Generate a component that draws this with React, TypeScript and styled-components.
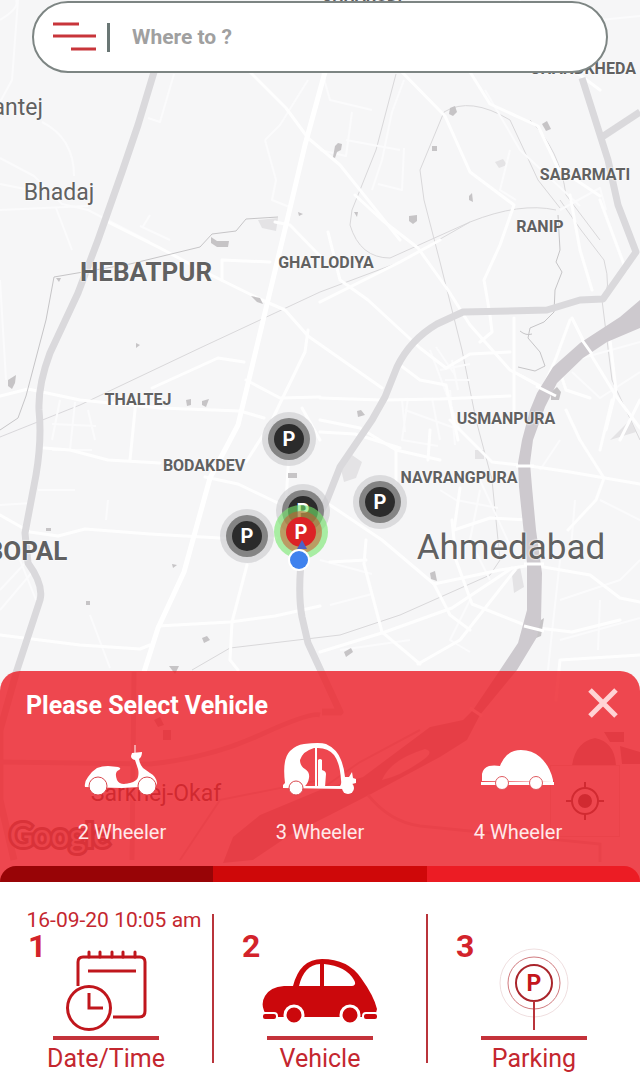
import React, { useState } from "react";
import styled, { createGlobalStyle, css } from "styled-components";

const GlobalStyle = createGlobalStyle`
  * { box-sizing: border-box; }
  body { margin: 0; background: #fff; font-family: Roboto, "Liberation Sans", sans-serif; }
  button, input { font: inherit; color: inherit; }
  button { background: none; border: 0; padding: 0; margin: 0; cursor: pointer; }
`;

const Page = styled.div`
  min-height: 100vh;
  display: flex;
  flex-direction: column;
`;

const MapArea = styled.main`
  position: relative;
  flex: 1;
  display: flex;
  flex-direction: column;
  justify-content: space-between;
  gap: 240px;
  overflow: hidden;
  background: #f6f6f7;
`;

/* Free canvas: the map scales as one piece, labels and pins sit at map coordinates. */
const MapCanvas = styled.div`
  position: absolute;
  top: 0;
  left: 50%;
  transform: translateX(-50%);
  min-width: 100%;
  min-height: 100%;
  aspect-ratio: 640 / 882;
  svg.roads { position: absolute; inset: 0; width: 100%; height: 100%; }
`;

const onMap = css<{ $x: number; $y: number }>`
  position: absolute;
  left: ${(p) => (p.$x / 640) * 100}%;
  top: ${(p) => (p.$y / 882) * 100}%;
  transform: translate(-50%, -50%);
`;

const Place = styled.span<{ $x: number; $y: number; $size: number; $weight: number }>`
  ${onMap}
  font-size: ${(p) => p.$size}px;
  font-weight: ${(p) => p.$weight};
  line-height: 1;
  color: #616161;
  white-space: nowrap;
  text-shadow: 0 0 2px #fff, 0 0 2px #fff;
`;

const Watermark = styled.span<{ $x: number; $y: number }>`
  ${onMap}
  font: 400 32px/1 Lato, sans-serif;
  color: #e0e0e0;
  -webkit-text-stroke: 6px #8a8a8a;
  paint-order: stroke fill;
`;

const Pin = styled.button<{ $x: number; $y: number; $active?: boolean }>`
  ${onMap}
  width: 54px;
  height: 54px;
  border-radius: 50%;
  display: grid;
  place-items: center;
  background: ${(p) => (p.$active ? "rgba(116, 232, 106, .6)" : "rgba(205, 205, 207, .65)")};
`;

const PinRing = styled.span<{ $active?: boolean }>`
  width: 42px;
  height: 42px;
  border-radius: 50%;
  display: grid;
  place-items: center;
  background: ${(p) => (p.$active ? "rgba(200, 90, 50, .55)" : "#848484")};
`;

const PinCore = styled.span<{ $active?: boolean }>`
  width: 30px;
  height: 30px;
  border-radius: 50%;
  display: grid;
  place-items: center;
  background: ${(p) => (p.$active ? "#dc2226" : "#2b2b2b")};
  color: #fff;
  font: 700 20px/30px "Liberation Sans Narrow", Roboto, sans-serif;
`;

const Locate = styled.button<{ $x: number; $y: number }>`
  ${onMap}
  width: 70px;
  height: 72px;
  display: grid;
  place-items: center;
  border: 1px solid #dedede;
  color: #666;
`;

const Position = styled.span<{ $x: number; $y: number }>`
  ${onMap}
  width: 24px;
  height: 44px;
`;

const SearchBar = styled.form`
  position: relative;
  height: 72px;
  margin: 1px 32px 0;
  padding: 0 24px 0 19px;
  display: flex;
  align-items: center;
  background: #fff;
  border: 2px solid #7d8583;
  border-radius: 36px;
`;

const MenuButton = styled.button`
  width: 44px;
  height: 44px;
  display: grid;
  place-items: center;
`;

const SearchDivider = styled.span`
  width: 3px;
  height: 29px;
  margin-left: 10px;
  background: #6a7775;
`;

const SearchInput = styled.input`
  flex: 1;
  min-width: 0;
  height: 44px;
  margin-left: 22px;
  padding: 0;
  border: 0;
  outline: 0;
  background: none;
  font-size: 21px;
  font-weight: 700;
  &::placeholder { color: #a0a0a0; opacity: 1; }
`;

const Sheet = styled.section`
  position: relative;
  background: rgba(236, 28, 36, 0.8);
  border-radius: 20px 20px 0 0;
  color: #fff;
`;

const SheetHeader = styled.header`
  display: flex;
  align-items: flex-start;
  justify-content: space-between;
  height: 38px;
  margin: 16px 21px 16px 26px;
`;

const SheetTitle = styled.h2`
  margin: 0;
  font-size: 25px;
  font-weight: 700;
  line-height: 38px;
`;

const CloseButton = styled.button`
  width: 32px;
  height: 32px;
  color: #ffd3d5;
  svg { display: block; }
`;

const VehicleList = styled.div`
  display: grid;
  grid-template-columns: repeat(3, 1fr);
  padding: 0 23px 22px;
`;

const VehicleButton = styled.button`
  display: flex;
  flex-direction: column;
  align-items: center;
  gap: 23px;
  font-size: 20px;
  line-height: 24px;
  color: #ffe9ea;
`;

const ProgressBar = styled.div`
  display: grid;
  grid-template-columns: repeat(3, 1fr);
  height: 16px;
  border-radius: 16px 16px 0 0;
  overflow: hidden;
`;

const ProgressPart = styled.span<{ $color: string }>`
  background: ${(p) => p.$color};
`;

const Steps = styled.nav`
  display: grid;
  grid-template-columns: 1fr 2px 1fr 2px 1fr;
  padding: 24px 0 16px;
  background: #fff;
  color: #c4272f;
`;

const StepDivider = styled.span`
  margin: 8px 0 13px;
  background: #b9343b;
`;

const StepButton = styled.button`
  display: flex;
  flex-direction: column;
  align-items: center;
`;

const StepWhen = styled.time`
  height: 26px;
  padding-left: 16px;
  font-size: 21px;
  line-height: 28px;
  white-space: nowrap;
`;

const StepBody = styled.span`
  width: 100%;
  height: 104px;
  display: grid;
  > * { grid-area: 1 / 1; }
  > svg { place-self: end center; }
`;

const StepNumber = styled.span`
  place-self: start;
  padding-left: 28px;
  font-size: 32px;
  font-weight: 700;
  line-height: 28px;
  color: #d3232b;
`;

const StepRule = styled.span`
  width: 106px;
  height: 4px;
  background: #c4323a;
`;

const StepLabel = styled.span`
  font-size: 25px;
  line-height: 38px;
  height: 36px;
`;

const localRoads = [
  "M0 20 Q20 8 16 0", "M42 122 Q74 138 74 176", "M0 158 L34 176 L62 204 L88 210 L150 242", "M0 184 L40 192 M0 210 L88 206",
  "M56 208 L72 250", "M0 102 L12 80 L18 0", "M110 60 L82 18", "M174 74 L160 122 L148 118",
  "M322 72 L330 100 L372 110 M352 112 L346 156 L320 150 M346 140 L400 150 M404 80 L392 112 L382 160 L372 190",
  "M265 140 L280 125 L308 80 M265 140 L276 180 L272 200 L292 208", "M378 184 L402 190 L404 148",
  "M0 280 L6 380 M60 400 L52 440 M75 402 L70 450 M95 440 L88 410 M52 424 L96 426 M52 450 L92 450 M38 490 L75 490 M108 500 L106 520",
  "M0 505 L32 503 M0 590 L28 560 M0 610 L34 570 M12 540 L36 600 M90 615 L110 668", "M140 226 L170 240 M142 228 L150 215",
  "M402 400 L405 432 M432 398 L440 440 M450 390 L455 445 M405 410 L460 430 M408 398 L402 440 L438 446",
  "M440 370 L470 364 M445 380 L470 380 M458 390 L452 360 M430 350 L460 430 M436 347 L455 375",
  "M480 490 L470 540 L490 580 M440 490 L456 500 L498 508 M480 480 L512 550", "M560 440 L540 470 M575 500 L570 560 M600 500 L640 520",
  "M560 560 L552 632 L548 670 M560 600 L620 580 L640 560 M600 600 L598 650 M560 640 L640 618",
  "M320 560 L372 574 M330 605 L372 594 M340 650 L410 640 M470 600 L450 640 L470 652", "M575 360 L640 342 M572 372 L600 398 L640 372",
  "M485 90 L520 150 L580 206 M510 150 L500 190 L516 200", "M600 20 L640 16 M520 0 L520 20 M560 210 L600 188 L606 210",
];

const mainRoads = [
  "M250 72 L286 108 L308 138 L340 165 L372 205 L400 240",
  "M108 222 L160 248 L205 272 L262 300 L285 310 L308 336 L382 388",
  "M395 65 L445 116 L470 172 L514 205 L500 245 L484 280 L490 315 L492 332 L480 342",
  "M355 195 L382 220 L418 248 L448 290 L470 325 L510 370 L548 390",
  "M470 72 L490 104 L538 126 L558 168 L600 196",
  "M0 396 L28 389 L80 400 L160 408 L240 411 L264 418",
  "M0 515 L30 532 L58 536 L85 529 L150 534 L220 538 L276 538",
  "M44 448 L70 450 L108 460 L160 463", "M205 477 L238 484 L280 504", "M158 626 L230 622 L275 616 L320 606",
  "M0 635 L80 645 L140 649 L150 645", "M247 565 L232 622 L230 660 L238 670",
  "M320 398 L382 400 L440 399 L510 396", "M320 432 L355 434 L400 448", "M514 318 L514 420",
  "M246 380 L280 398 L320 397", "M308 330 L305 352 L270 424 L246 462", "M136 400 L130 460 M152 388 L218 358 L244 362",
  "M222 260 L222 280 M222 260 L270 262", "M275 222 L290 225 L320 256",
  "M328 232 L340 280 L368 300 L420 348 L446 368 L470 354 L510 352",
  "M320 302 L400 262 L440 240", "M400 365 L420 380 L446 385 L458 440",
  "M330 505 L382 540 L434 584 L500 570 L532 565 L590 575 L620 598 L640 602",
  "M450 420 L492 462 L530 466 L570 472 L640 484", "M566 410 L580 440 L604 478 L596 500 L568 530",
  "M572 318 L588 350 L616 396 L640 428", "M570 320 L556 358 L540 395 L524 440", "M514 372 L550 392",
  "M366 560 L330 562 M366 540 L364 564 L382 632 L420 664", "M320 652 L385 632 L452 608 L512 568",
  "M434 584 L450 615 L470 630", "M452 520 L456 560 L472 604 L530 627 L572 632 L620 620",
  "M418 664 L460 640 L515 570", "M525 628 L510 670", "M460 488 L454 530 L490 518 L530 520",
  "M396 450 L396 482 M430 430 L428 460", "M320 420 L360 428 L396 450 L440 460",
  "M590 398 L566 390 L560 372 M612 400 L600 450", "M620 440 L640 400 M610 340 L616 390 L606 430",
  "M570 195 L580 250 L592 290", "M600 200 L626 270", "M290 440 L286 500", "M302 408 L320 440",
  "M576 72 L600 90 M556 700 L560 660 L640 655",
];

const railways = [
  "M396 74 L376 150 L352 210 L350 225 Q360 258 390 258 L470 222 Q520 202 556 210",
  "M0 437 L80 405 L200 348 L320 292 L400 262 L470 222",
  "M424 200 L440 262 L462 350 L476 420 L492 480 L500 560 L490 575 L400 615 L340 635 L230 648 L192 670",
  "M424 200 L420 170 L444 112 Q470 96 510 120 L538 180 L560 208",
  "M560 200 Q580 230 604 260 Q612 290 602 300 L612 380 L640 440",
  "M530 120 Q560 150 566 195 L600 240",
];

const streams = [
  "M0 430 L18 418 L26 396 L46 320 L54 277 L130 264 L200 247 L212 234 L236 231 L246 219 L278 217",
  "M558 215 L560 250 L556 262 L562 272 L555 290 L554 312 L544 322 L530 328 L528 338 L540 352 L545 366 L535 371 L518 367",
  "M520 331 Q526 336 532 334",
];

const patches = [
  "M450 108 l5 -2 2 6 -4 4 -4 -2z", "M542 124 l5 -3 4 8 -5 2z", "M335 146 l3 -3 4 1 -1 6 -4 2 -2 6 -2 -1z", "M432 146 h5 v5 h-5z",
  "M469 196 l3 -3 1 9 -4 -2z", "M409 216 l8 -1 0 6 -4 3 -4 -3z", "M354 212 h4 l-1 5z", "M298 212 l5 2 -4 2z",
  "M211 237 l6 4 12 0 -1 6 -11 0 -6 -4z", "M56 278 h5 l-2 4z", "M136 343 l4 2 -4 3z", "M8 380 l8 -5 -1 8 -3 6 -4 -3z",
  "M186 400 l5 -1 0 6 -4 1z", "M202 401 l7 -2 -3 8 -4 -2z", "M251 296 l9 2 3 6 -6 -2z", "M357 411 l4 -1 4 5 -7 2z",
  "M288 473 h9 v5 h-9z", "M46 528 h5 v3 h-5z", "M86 601 h4 v4 h-4z", "M172 564 l5 1 -4 3z", "M202 638 l5 -2 3 4 -6 3z",
  "M169 666 h10 l-4 8z", "M344 652 l7 -4 2 4 -7 5z", "M551 392 l6 -5 4 5 -2 8 -8 0z", "M430 573 l5 -2 2 10 -6 -2z",
  "M538 622 l6 -4 -3 18 -5 2z", "M154 720 l6 -3 4 8 -6 2z M163 730 h8 v10 h-8z",
];

const highways = [
  "M154 72 L138 125 L122 172 L98 240 L78 293 L50 353 Q38 385 39 410 Q42 440 36 475 L25 533 L28 563 Q44 585 40 600 L17 670 L0 730 V800 L14 860",
  "M582 78 L608 160 L618 205 L636 252 L603 299 L580 300 L547 310 L463 312 L437 324 Q410 340 397 367 L385 397 L372 420 L340 467 L327 500 L303 545 Q297 590 302 617 L308 643 L340 712 L322 712",
  "M602 137 L640 112",
];

const RoadMap = () => (
  <svg className="roads" viewBox="0 0 640 882" fill="none" aria-hidden="true">
    <rect width="640" height="882" fill="#f6f6f7" />
    <path d="M258 220 L278 218 276 231 262 228z M340 465 L352 455 362 462 356 478 344 482z M495 162 l8 -3 4 6 -8 3z M475 450 h9 v9 h-9z M512 575 l8 -8 4 20 -10 6z M610 440 l20 -20 6 12z" fill="#e4e3e5" />
    <g stroke="#d9d8da" strokeWidth="1">
      {railways.map((d) => <path key={d} d={d} />)}
    </g>
    <g stroke="#fbfbfc" strokeWidth="2" strokeLinejoin="round">
      {localRoads.map((d) => <path key={d} d={d} />)}
    </g>
    <g stroke="#fefefe" strokeWidth="3" strokeLinejoin="round" strokeLinecap="round">
      {mainRoads.map((d) => <path key={d} d={d} />)}
    </g>
    <path d="M325 72 L305 145 L286 225 L262 325 L238 425 L210 478 L184 572 L158 628 L144 672" stroke="#fff" strokeWidth="5" strokeLinejoin="round" />
    <g stroke="#c6c5c7" strokeWidth="1">
      {streams.map((d) => <path key={d} d={d} />)}
    </g>
    <g fill="#c6c4c6">
      {patches.map((d) => <path key={d} d={d} />)}
    </g>
    <g stroke="#dad9dc" strokeWidth="7" strokeLinejoin="round">
      {highways.map((d) => <path key={d} d={d} />)}
    </g>
    <path
      d="M640 300 L620 317 580 343 553 367 537 393 530 410 522 440 518 463 519 487 527 563 527 610 518 643 500 670 473 710 463 720 430 727 363 777 320 790 260 815 233 837 223 863 253 860 290 835 330 815 373 793 440 757 467 740 480 715 517 670 537 637 541 620 542 573 536 530 532 487 530 463 533 440 545 407 557 383 583 358 607 342 640 328z"
      fill="#cdc9ce"
    />
    <path d="M382 780 Q390 760 425 749 Q436 752 420 762 Q400 776 382 780z" fill="#f3f2f4" />
    <g stroke="#fff" strokeWidth="3">
      <path d="M582 340 L592 354 M536 386 L556 396 M516 466 H534 M524 564 H544 M524 626 L544 631 M470 708 L482 716" />
    </g>
    <g stroke="#dcdbde" strokeWidth="5">
      <path d="M0 762 L150 764 Q210 758 260 735 T320 715 M134 672 L132 860" />
      <path d="M368 795 Q390 822 420 826 L600 844 V862" strokeWidth="3" />
      <path d="M320 790 L360 762 L420 730 M180 860 L220 800 L320 780" strokeWidth="2" />
    </g>
    <path d="M572 766 Q575 742 595 738 Q615 742 616 766z M604 732 h20 v10 h-14z M620 746 l20 6 v12 h-18z" fill="#bdbabd" />
  </svg>
);

const places: [string, number, number, number, number][] = [
  ["CHHARODI", 362, -4, 16, 700],
  ["CHANDKHEDA", 583, 69, 16, 700],
  ["Santej", 11, 107, 23, 400],
  ["Bhadaj", 59, 192, 23, 400],
  ["HEBATPUR", 146, 272, 26, 700],
  ["GHATLODIYA", 326, 263, 16, 700],
  ["SABARMATI", 585, 175, 16, 700],
  ["RANIP", 540, 227, 16, 700],
  ["THALTEJ", 138, 400, 16, 700],
  ["BODAKDEV", 204, 466, 16, 700],
  ["USMANPURA", 506, 419, 16, 700],
  ["NAVRANGPURA", 459, 478, 16, 700],
  ["BOPAL", 27, 551, 26, 700],
  ["Ahmedabad", 511, 547, 35, 400],
  ["Sarkhej-Okaf", 156, 793, 23, 400],
];

const parkings: [number, number, boolean][] = [
  [289, 439, false],
  [303, 511, false],
  [247, 536, false],
  [380, 502, false],
  [301, 532, true],
];

const ScooterIcon = () => (
  <svg width="80" height="56" viewBox="0 0 80 56" fill="none" aria-hidden="true">
    <path d="M3 46 Q2 41 6 36 Q10 30 15 27 Q20 25 26 25 L36 26 Q40 27 37 29 Q32 31 35 39 Q37 43 42 43 L48 42 Q55 40 56 36 Q57 32 56 28 L53 19 Q49 18 49 15 L50 12 L60 11 Q60 16 57 18 Q58 24 61 27 L68 32 Q74 35 75 42 L74 45 L40 47z" fill="#fff" />
    <path d="M53 12 V4" stroke="#fff" strokeWidth="1" />
    <g fill="#fff" stroke="#d9484e" strokeWidth="1">
      <circle cx="16" cy="45" r="9" /><circle cx="65" cy="45" r="9" />
    </g>
  </svg>
);

const RickshawIcon = () => (
  <svg width="80" height="56" viewBox="0 0 80 56" fill="none" aria-hidden="true">
    <path fillRule="evenodd" d="M3 47 V44 L5 42 Q2 18 10 10 Q16 4 24 3 Q40 1 46 3 Q57 8 61 19 Q64 26 65 36 L69 36 L72 31 L73 37 L76 38 V42 L72 43 L66 48z M34 7 Q23 10 20 19 Q20 25 25 28 Q30 31 29 37 Q28 43 24 46 H58 Q62 45 61 39 Q60 22 54 14 Q48 7 38 7z" fill="#fff" />
    <path d="M36 4 V46" stroke="#fff" strokeWidth="2" />
    <path d="M38 46 V19 Q40 17 42 19 L42 29 Q46 30 46 33 L45 46z" fill="#fff" />
    <path d="M24 46 H64" stroke="#fff" strokeWidth="2" />
    <circle cx="16" cy="47" r="7" fill="#fff" stroke="#d9484e" strokeWidth="1" />
    <circle cx="68" cy="47" r="6" fill="#fff" />
  </svg>
);

const CarIcon = () => (
  <svg width="80" height="56" viewBox="0 0 80 56" fill="none" aria-hidden="true">
    <path d="M4 40 V33 Q5 27 11 25 Q16 24 22 25 Q24 19 29 14 Q35 9 43 9 Q54 9 62 16 Q72 25 75 39 V41z M3 41 H76 V44 H3z" fill="#fff" />
    <g fill="#fff" stroke="#df5a60" strokeWidth="1">
      <circle cx="24" cy="42" r="6.500" /><circle cx="58" cy="42" r="6.500" />
    </g>
  </svg>
);

const CalendarClockIcon = () => (
  <svg width="82" height="88" viewBox="0 0 82 88" fill="none" stroke="#c0161c" strokeWidth="3" aria-hidden="true">
    <path d="M13 38 V14 Q13 9 18 9 H75 Q80 9 80 14 V63 Q80 69 74 69 H48" />
    <path d="M24 4 V9 M35 4 V9 M47 4 V9 M58 4 V9 M70 4 V9" strokeLinecap="round" />
    <path d="M23 23 H71" />
    <circle cx="24" cy="60" r="21.500" />
    <path d="M24 45 V60 H38" />
  </svg>
);

const RedCarIcon = () => (
  <svg width="116" height="88" viewBox="0 0 116 88" fill="none" aria-hidden="true">
    <path fillRule="evenodd" d="M6 69 Q-3 58 3 48 Q8 39 22 38 L31 38 Q38 11 60 11 Q86 11 99 30 Q112 48 115 61 L113 69 H6z M37 38 H58 V16 Q42 17 37 38z M62 38 H90 Q95 37 92 32 Q84 18 62 16z" fill="#cb080c" />
    <g fill="#cb080c" stroke="#fff" strokeWidth="3">
      <circle cx="32" cy="67" r="9" /><circle cx="88" cy="67" r="9" />
      <rect x="0" y="65" width="15" height="7" rx="3" strokeWidth="2" />
      <rect x="101" y="65" width="15" height="7" rx="3" strokeWidth="2" />
    </g>
  </svg>
);

const ParkingMark = styled.text`
  font: 700 23px "Liberation Sans Narrow", Roboto, sans-serif;
  fill: #c4161c;
`;

const ParkingIcon = () => (
  <svg width="72" height="88" viewBox="0 0 72 88" fill="none" aria-hidden="true">
    <circle cx="36" cy="35" r="34" stroke="#f0dfe0" />
    <circle cx="36" cy="35" r="26" stroke="#d07a7e" />
    <circle cx="36" cy="35" r="18" stroke="#a9252b" strokeWidth="2" />
    <path d="M36 53 V82" stroke="#b9343b" strokeWidth="2" />
    <ParkingMark x="36" y="43" textAnchor="middle">P</ParkingMark>
  </svg>
);

const vehicles = [
  { name: "2 Wheeler", Icon: ScooterIcon },
  { name: "3 Wheeler", Icon: RickshawIcon },
  { name: "4 Wheeler", Icon: CarIcon },
];

const steps = [
  { label: "Date/Time", when: "16-09-20 10:05 am", Icon: CalendarClockIcon },
  { label: "Vehicle", when: "", Icon: RedCarIcon },
  { label: "Parking", when: "", Icon: ParkingIcon },
];

export default function App() {
  const [query, setQuery] = useState("");
  return (
    <>
      <GlobalStyle />
      <Page>
        <MapArea>
          <MapCanvas>
            <RoadMap />
            {places.map(([name, x, y, size, weight]) => (
              <Place key={name} $x={x} $y={y} $size={size} $weight={weight}>{name}</Place>
            ))}
            <Watermark $x={60} $y={835}>Google</Watermark>
            <Locate type="button" aria-label="My location" $x={585} $y={801}>
              <svg width="38" height="38" viewBox="0 0 38 38" fill="none" stroke="currentColor" strokeWidth="2">
                <circle cx="19" cy="19" r="13" /><circle cx="19" cy="19" r="6" fill="currentColor" />
                <path d="M19 0 V6 M19 32 V38 M0 19 H6 M32 19 H38" />
              </svg>
            </Locate>
            {parkings.map(([x, y, active]) => (
              <Pin key={`${x}-${y}`} type="button" aria-label="Parking" $x={x} $y={y} $active={active}>
                <PinRing $active={active}><PinCore $active={active}>P</PinCore></PinRing>
              </Pin>
            ))}
            <Position $x={299} $y={550}>
              <svg width="24" height="44" viewBox="0 0 24 44" aria-hidden="true">
                <path d="M15 12 L20 21 H10z" fill="#4a62c8" />
                <circle cx="12" cy="32" r="11" fill="#fff" />
                <circle cx="12" cy="32" r="9" fill="#3f82ee" />
              </svg>
            </Position>
          </MapCanvas>

          <SearchBar role="search" onSubmit={(e) => e.preventDefault()}>
            <MenuButton type="button" aria-label="Menu">
              <svg width="44" height="30" viewBox="0 0 44 30" stroke="#c8353a" strokeWidth="3">
                <path d="M0 2 H26 M0 14 H43 M18 27 H43" />
              </svg>
            </MenuButton>
            <SearchDivider />
            <SearchInput
              type="text"
              aria-label="Destination"
              placeholder="Where to ?"
              value={query}
              onChange={(e) => setQuery(e.target.value)}
            />
          </SearchBar>

          <Sheet>
            <SheetHeader>
              <SheetTitle>Please Select Vehicle</SheetTitle>
              <CloseButton type="button" aria-label="Close">
                <svg width="32" height="32" viewBox="0 0 32 32" stroke="currentColor" strokeWidth="5">
                  <path d="M3 3 L29 29 M29 3 L3 29" />
                </svg>
              </CloseButton>
            </SheetHeader>
            <VehicleList>
              {vehicles.map(({ name, Icon }) => (
                <VehicleButton key={name} type="button"><Icon />{name}</VehicleButton>
              ))}
            </VehicleList>
            <ProgressBar>
              <ProgressPart $color="#980406" />
              <ProgressPart $color="#cf0809" />
              <ProgressPart $color="#ec1c24" />
            </ProgressBar>
          </Sheet>
        </MapArea>

        <Steps aria-label="Booking steps">
          {steps.map(({ label, when, Icon }, i) => (
            <React.Fragment key={label}>
              {i > 0 && <StepDivider />}
              <StepButton type="button">
                <StepWhen>{when}</StepWhen>
                <StepBody>
                  <StepNumber>{i + 1}</StepNumber>
                  <Icon />
                </StepBody>
                <StepRule />
                <StepLabel>{label}</StepLabel>
              </StepButton>
            </React.Fragment>
          ))}
        </Steps>
      </Page>
    </>
  );
}
